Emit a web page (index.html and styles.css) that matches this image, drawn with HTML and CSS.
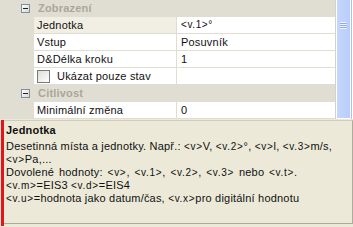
FILE: index.html
```html
<!DOCTYPE html>
<html lang="cs">
<head>
  <meta charset="UTF-8">
  <title>Vlastnosti</title>
  <link rel="stylesheet" href="styles.css">
</head>
<body>
  <div class="pane">
    <div class="grid">
      <div class="row group">
        <div class="gutter"><span class="toggle"></span></div>
        <div class="group-label">Zobrazení</div>
      </div>
      <div class="row selected">
        <div class="gutter"></div>
        <div class="name">Jednotka</div>
        <div class="value small">&lt;v.1&gt;°</div>
      </div>
      <div class="row">
        <div class="gutter"></div>
        <div class="name">Vstup</div>
        <div class="value">Posuvník</div>
      </div>
      <div class="row">
        <div class="gutter"></div>
        <div class="name">D&amp;Délka kroku</div>
        <div class="value">1</div>
      </div>
      <div class="row">
        <div class="gutter"></div>
        <div class="name check"><span class="box"></span>Ukázat pouze stav</div>
        <div class="value"></div>
      </div>
      <div class="row group">
        <div class="gutter"><span class="toggle"></span></div>
        <div class="group-label">Citlivost</div>
      </div>
      <div class="row">
        <div class="gutter"></div>
        <div class="name">Minimální změna</div>
        <div class="value">0</div>
      </div>
    </div>
    <div class="scroll">
      <div class="thumb"><span class="grip"></span></div>
    </div>
  </div>

  <div class="help">
    <div class="desc">
      <div class="title">Jednotka</div>
      <div class="line">Desetinná místa a jednotky. Např.: <span class="tag">&lt;v&gt;</span>V, <span class="tag">&lt;v.2&gt;</span>°, <span class="tag">&lt;v&gt;</span>l, <span class="tag">&lt;v.3&gt;</span>m/s,</div>
      <div class="line"><span class="tag">&lt;v&gt;</span>Pa,...</div>
      <div class="line wide">Dovolené hodnoty: <span class="tag">&lt;v&gt;</span>, <span class="tag">&lt;v.1&gt;</span>, <span class="tag">&lt;v.2&gt;</span>, <span class="tag">&lt;v.3&gt;</span> nebo <span class="tag">&lt;v.t&gt;</span>.</div>
      <div class="line"><span class="tag">&lt;v.m&gt;</span>=EIS3 <span class="tag">&lt;v.d&gt;</span>=EIS4</div>
      <div class="line"><span class="tag">&lt;v.u&gt;</span>=hodnota jako datum/čas, <span class="tag">&lt;v.x&gt;</span>pro digitální hodnotu</div>
    </div>
  </div>
</body>
</html>
```

FILE: styles.css
```css
body {
  margin: 0;
  width: 353px;
  height: 227px;
  overflow: hidden;
  background-color: #ece9d8;
  font-family: "Liberation Sans", Arial, sans-serif;
  font-size: 11px;
  letter-spacing: 0.2px;
  color: #111;
}
.pane {
  display: flex;
  height: 119px;
}
.grid {
  width: 336px;
  background-color: #e0ded2;
  border-right: 1px solid #d6d3c6;
}
.row {
  display: flex;
  height: 16px;
  margin-bottom: 1px;
  line-height: 16px;
}
.gutter {
  width: 34px;
  flex: none;
  position: relative;
}
.toggle {
  position: absolute;
  left: 21px;
  top: 4px;
  width: 7px;
  height: 7px;
  border: 1px solid #7f8ea4;
  background: linear-gradient(135deg, #ffffff, #d8d6ca);
}
.toggle::after {
  content: "";
  position: absolute;
  left: 1px;
  top: 3px;
  width: 5px;
  height: 1px;
  background-color: #222;
}
.group-label {
  padding-left: 4px;
  font-weight: bold;
  color: #aaa799;
}
.name {
  width: 139px;
  padding-left: 3px;
  background-color: #fff;
  margin-right: 1px;
  white-space: nowrap;
}
.selected .name {
  background-color: #f1efe4;
}
.value {
  flex: 1;
  padding-left: 4px;
  background-color: #fff;
}
.small {
  font-size: 10px;
  letter-spacing: 0.6px;
}
.check {
  display: flex;
  align-items: center;
}
.box {
  width: 11px;
  height: 11px;
  margin: 0 7px 0 0;
  border: 1px solid #7a7a7a;
  background: linear-gradient(135deg, #dcdcd6, #ffffff);
}
.scroll {
  width: 16px;
  background-color: #fff;
  padding-left: 1px;
  display: flex;
}
.thumb {
  width: 13px;
  height: 118px;
  margin-right: 1px;
  background: linear-gradient(to right, #c6d6fc, #b9cdfb);
  position: relative;
}
.scroll::after {
  content: "";
  width: 1px;
  background-color: #aebff0;
}
.grip {
  position: absolute;
  left: 3px;
  top: 22px;
  width: 7px;
  height: 7px;
  background: repeating-linear-gradient(to bottom, #eef3ff 0, #eef3ff 1px, #8faaf0 1px, #8faaf0 2px);
}
.help {
  margin-top: 1px;
  margin-left: 1px;
  border-left: 3px solid #e8131a;
  height: 106px;
}
.desc {
  height: 99px;
  padding: 3px 0 0 2px;
  border-top: 1px solid #cfccbd;
  border-right: 1px solid #aeab9c;
  border-bottom: 1px solid #aeab9c;
}
.title {
  font-weight: bold;
  line-height: 13px;
  margin-bottom: 3px;
}
.line {
  line-height: 13px;
  white-space: nowrap;
}
.wide {
  word-spacing: 1.6px;
}
.tag {
  font-size: 10px;
  letter-spacing: 0.7px;
}
```
